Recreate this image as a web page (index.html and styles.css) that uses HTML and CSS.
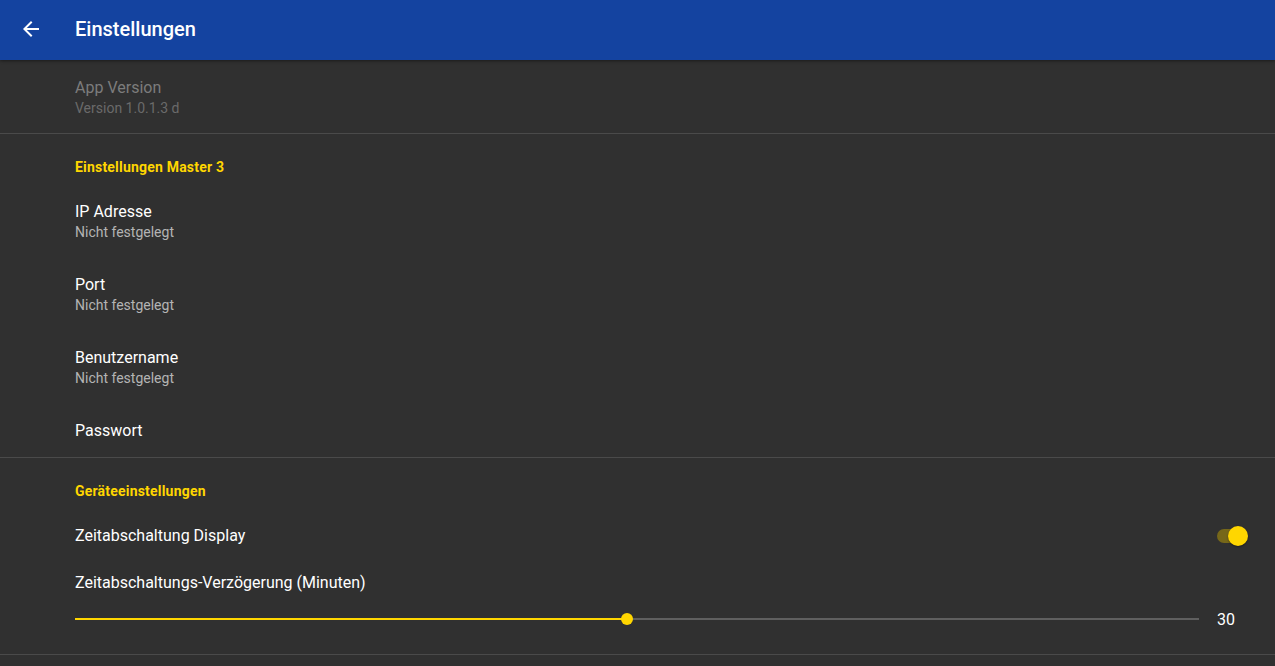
FILE: index.html
```html
<!DOCTYPE html>
<html lang="de">
<head>
<meta charset="utf-8">
<title>Einstellungen</title>
<link rel="stylesheet" href="styles.css">
</head>
<body>
<header class="appbar">
  <span class="back">
    <svg width="24" height="24" viewBox="0 0 24 24"><path d="M20 11H7.83l5.59-5.59L12 4l-8 8 8 8 1.41-1.41L7.83 13H20v-2z" fill="#fff"/></svg>
  </span>
  <h1 class="title">Einstellungen</h1>
</header>
<main class="list">
  <div class="item disabled">
    <div class="item-title">App Version</div>
    <div class="item-summary">Version 1.0.1.3 d</div>
  </div>
  <div class="divider"></div>
  <div class="category">Einstellungen Master 3</div>
  <div class="item">
    <div class="item-title">IP Adresse</div>
    <div class="item-summary">Nicht festgelegt</div>
  </div>
  <div class="item">
    <div class="item-title">Port</div>
    <div class="item-summary">Nicht festgelegt</div>
  </div>
  <div class="item">
    <div class="item-title">Benutzername</div>
    <div class="item-summary">Nicht festgelegt</div>
  </div>
  <div class="item">
    <div class="item-title">Passwort</div>
  </div>
  <div class="divider"></div>
  <div class="category">Geräteeinstellungen</div>
  <div class="item switch-item">
    <div class="item-title">Zeitabschaltung Display</div>
    <span class="switch"><span class="switch-track"></span><span class="switch-thumb"></span></span>
  </div>
  <div class="item slider-item">
    <div class="item-title">Zeitabschaltungs-Verzögerung (Minuten)</div>
    <div class="slider-row">
      <div class="slider">
        <div class="slider-fill" style="width:49.1%"></div>
        <div class="slider-thumb" style="left:49.1%"></div>
      </div>
      <span class="slider-value">30</span>
    </div>
  </div>
  <div class="divider"></div>
</main>
</body>
</html>
```
FILE: styles.css
```css
* { box-sizing: border-box; }
html, body {
  margin: 0;
  padding: 0;
  background: #303030;
  font-family: Roboto, "Noto Sans", sans-serif;
  color: #fff;
  overflow: hidden;
}
.appbar {
  height: 60px;
  background: #1443a0;
  display: flex;
  align-items: center;
  box-shadow: 0 1px 3px rgba(0,0,0,0.45);
  position: relative;
  z-index: 1;
}
.back {
  width: 24px;
  height: 24px;
  margin-left: 19px;
  margin-top: -3px;
  display: flex;
}
.title {
  margin: 0 0 0 32px;
  font-size: 20px;
  font-weight: 500;
  margin-top: -2px;
}
.list { display: flex; flex-direction: column; }
.item {
  padding: 17px 40px 15px 75px;
  min-height: 54px;
}
.item-title {
  font-size: 16px;
  line-height: 21px;
  color: #fff;
}
.item-summary {
  font-size: 14px;
  line-height: 20px;
  color: #b4b4b4;
}
.disabled .item-title { color: #7c7c7c; }
.disabled .item-summary { color: #6a6a6a; }
.divider {
  height: 1px;
  background: #4a4a4a;
}
.category {
  padding: 25px 0 9px 75px;
  font-size: 14px;
  line-height: 16px;
  font-weight: 700;
  letter-spacing: 0.2px;
  color: #ffd600;
}
.switch-item {
  display: flex;
  align-items: center;
  justify-content: space-between;
  padding-right: 27px;
  padding-top: 1px;
  padding-bottom: 0;
  height: 54px;
}
.switch {
  position: relative;
  width: 31px;
  height: 20px;
}
.switch-track {
  position: absolute;
  left: 0;
  top: 3px;
  width: 28px;
  height: 14px;
  border-radius: 7px;
  background: #766719;
}
.switch-thumb {
  position: absolute;
  right: 0;
  top: 0;
  width: 20px;
  height: 20px;
  border-radius: 50%;
  background: #ffd600;
  box-shadow: 0 1px 2px rgba(0,0,0,0.4);
}
.slider-item {
  padding: 10px 40px 0 75px;
  height: 92px;
}
.slider-row {
  display: flex;
  align-items: center;
  height: 54px;
  margin-top: -1px;
}
.slider {
  position: relative;
  flex: 1;
  height: 2px;
  background: #5f5f5f;
}
.slider-fill {
  position: absolute;
  left: 0;
  top: 0;
  height: 2px;
  background: #ffd600;
}
.slider-thumb {
  position: absolute;
  top: 1px;
  width: 12px;
  height: 12px;
  margin-left: -6px;
  margin-top: -6px;
  border-radius: 50%;
  background: #ffd600;
}
.slider-value {
  margin-left: 18px;
  font-size: 16px;
  color: #fff;
}
```
